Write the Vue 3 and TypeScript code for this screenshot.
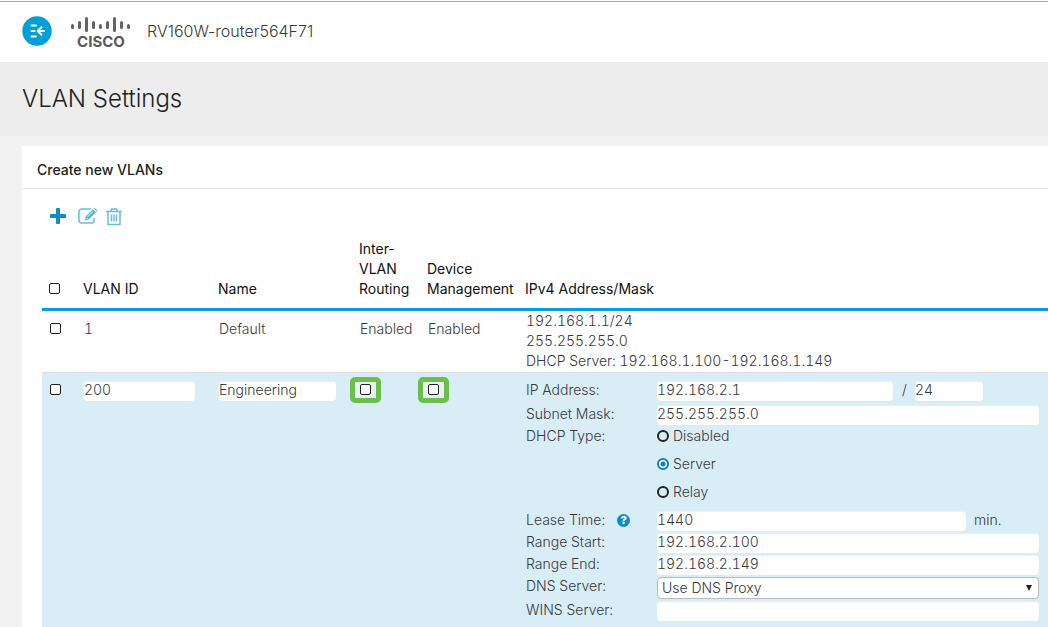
<script setup lang="ts">
import { ref } from 'vue'

interface Vlan {
  id: number
  name: string
  routing: string
  management: string
  lines: string[]
}

const vlans: Vlan[] = [
  {
    id: 1,
    name: 'Default',
    routing: 'Enabled',
    management: 'Enabled',
    lines: ['192.168.1.1/24', '255.255.255.0', 'DHCP Server: 192.168.1.100-192.168.1.149'],
  },
]

const dhcpTypes = ['Disabled', 'Server', 'Relay']
const dhcpType = ref('Server')
const vlanId = ref('200')
const vlanName = ref('Engineering')
const ip = ref('192.168.2.1')
const prefix = ref('24')
const mask = ref('255.255.255.0')
const lease = ref('1440')
const rangeStart = ref('192.168.2.100')
const rangeEnd = ref('192.168.2.149')
const dns = ref('Use DNS Proxy')
const wins = ref('')

// x, top and height of each bar of the logo
const bars = [
  [1, 8, 5], [8, 5, 8], [15, 1, 15], [22, 5, 8], [29, 8, 5],
  [36, 5, 8], [43, 1, 15], [50, 5, 8], [57, 8, 5],
]
</script>

<template>
  <div class="page">
    <header class="topbar">
      <button class="menu" type="button" aria-label="Toggle navigation">
        <svg width="30" height="30" viewBox="0 0 30 30">
          <circle cx="15" cy="15" r="14.7" fill="#049fd9" />
          <g fill="none" stroke="#fff" stroke-width="2" stroke-linecap="round" stroke-linejoin="round">
            <path d="M9.500 9.500h4.500M9.500 15h3M9.500 20.500h4.500" />
            <path d="M22 15h-5.500M19.500 11.200L15.700 15l3.800 3.800" />
          </g>
        </svg>
      </button>
      <div class="brand">
        <svg width="62" height="18" viewBox="0 0 62 18" aria-hidden="true">
          <rect v-for="b in bars" :key="b[0]" :x="b[0]" :y="b[1]" width="3" :height="b[2]" rx="1.500" fill="#636466" />
        </svg>
        <span class="brand-name">CISCO</span>
      </div>
      <span class="device">RV160W-router564F71</span>
    </header>

    <div class="title"><h1>VLAN Settings</h1></div>

    <main class="card">
      <h2>Create new VLANs</h2>
      <div class="tools">
        <button type="button" class="add" aria-label="Add">
          <svg width="16" height="16" viewBox="0 0 16 16"><path d="M8 1.500v13M1.500 8h13" stroke="#0d8dc0" stroke-width="4" stroke-linecap="round" /></svg>
        </button>
        <button type="button" aria-label="Edit">
          <svg width="20" height="16" viewBox="0 0 20 16">
            <path d="M13 1H3.500A2.500 2.500 0 0 0 1 3.500v9A2.500 2.500 0 0 0 3.500 15h10a2.500 2.500 0 0 0 2.500-2.500V10" fill="none" stroke="#6cbbdb" stroke-width="1.500" />
            <path d="M7 12.500l.6-4L15 1.200l3 3-7.300 7.300zM15.800.6l1-.5 2.900 2.800-.7 1z" fill="#5ab3d8" />
            <path d="M9.500 8.800l5-5M8.200 9.700l1.500 1.600" stroke="#fff" stroke-width=".8" />
          </svg>
        </button>
        <button type="button" aria-label="Delete">
          <svg width="16" height="18" viewBox="0 0 16 18" fill="none" stroke="#6cbbdb" stroke-width="1.500">
            <path d="M0 3.500h16M4.500 3.500L5.500 1h5l1 2.500M2 4v12.500h12V4M5.500 6.500v7M8 6.500v7M10.500 6.500v7" />
          </svg>
        </button>
      </div>

      <table>
        <colgroup>
          <col class="c-check" /><col class="c-id" /><col class="c-name" />
          <col class="c-routing" /><col class="c-mgmt" /><col />
        </colgroup>
        <thead>
          <tr>
            <th><input type="checkbox" aria-label="Select all VLANs" /></th>
            <th>VLAN ID</th>
            <th>Name</th>
            <th>Inter-<br />VLAN Routing</th>
            <th>Device Management</th>
            <th>IPv4 Address/Mask</th>
          </tr>
        </thead>
        <tbody>
          <tr v-for="v in vlans" :key="v.id" class="row">
            <td><input type="checkbox" :aria-label="`Select VLAN ${v.id}`" /></td>
            <td>{{ v.id }}</td>
            <td>{{ v.name }}</td>
            <td>{{ v.routing }}</td>
            <td>{{ v.management }}</td>
            <td class="address"><div v-for="l in v.lines" :key="l">{{ l }}</div></td>
          </tr>
          <tr class="editing">
            <td><input type="checkbox" aria-label="Select VLAN 200" /></td>
            <td><input v-model="vlanId" class="text" type="text" aria-label="VLAN ID" /></td>
            <td><input v-model="vlanName" class="text" type="text" aria-label="Name" /></td>
            <td class="marked"><label class="mark"><input type="checkbox" aria-label="Inter-VLAN Routing" /></label></td>
            <td class="marked"><label class="mark"><input type="checkbox" aria-label="Device Management" /></label></td>
            <td>
              <div class="form">
                <label for="ip">IP Address:</label>
                <div class="field split">
                  <input id="ip" v-model="ip" class="text" type="text" />
                  <span class="slash">/</span>
                  <input v-model="prefix" class="text" type="text" aria-label="Prefix length" />
                </div>
                <label for="mask" class="spaced">Subnet Mask:</label>
                <div class="field spaced"><input id="mask" v-model="mask" class="text" type="text" /></div>
                <span id="dhcp-type">DHCP Type:</span>
                <div class="radios" role="radiogroup" aria-labelledby="dhcp-type">
                  <label v-for="t in dhcpTypes" :key="t">
                    <input v-model="dhcpType" type="radio" name="dhcp" :value="t" />{{ t }}
                  </label>
                </div>
                <div class="with-help">
                  <label for="lease">Lease Time:</label>
                  <button class="help" type="button" aria-label="Lease time help">?</button>
                </div>
                <div class="field lease">
                  <input id="lease" v-model="lease" class="text" type="text" />
                  <span>min.</span>
                </div>
                <label for="start">Range Start:</label>
                <div class="field"><input id="start" v-model="rangeStart" class="text" type="text" /></div>
                <label for="end">Range End:</label>
                <div class="field"><input id="end" v-model="rangeEnd" class="text" type="text" /></div>
                <label for="dns">DNS Server:</label>
                <div class="field picker">
                  <select id="dns" v-model="dns"><option>Use DNS Proxy</option></select>
                </div>
                <label for="wins">WINS Server:</label>
                <div class="field"><input id="wins" v-model="wins" class="text" type="text" /></div>
                <span class="spaced">DHCP Options:</span>
              </div>
            </td>
          </tr>
        </tbody>
      </table>
    </main>
  </div>
</template>

<style>
html {
  scrollbar-width: none;
}
body {
  margin: 0;
  background: #f2f2f2;
}
</style>

<style scoped>
.page {
  font: 300 14px/20px Inter, "Liberation Sans", sans-serif;
  color: #39393b;
  border-top: 1px solid #fff;
}
button {
  padding: 0;
  border: 0;
  background: none;
  display: flex;
  cursor: pointer;
}
svg {
  display: block;
}
.topbar {
  height: 58px;
  border-top: 1px solid #b0b0b0;
  background: #fff;
  display: flex;
  align-items: center;
  padding: 0 0 2px 22px;
}
.brand {
  margin-left: 18px;
  padding-top: 4px;
  display: flex;
  flex-direction: column;
  align-items: center;
}
.brand-name {
  font: 700 15px/16px Inter, sans-serif;
  color: #58595b;
}
.device {
  margin-left: 15px;
  font-size: 16px;
}
.title {
  background: #ededed;
  padding: 21px 22px;
}
h1 {
  margin: 0;
  font-size: 24px;
  line-height: 32px;
  font-weight: 300;
  color: #222;
}
.card {
  margin: 10px 0 0 22px;
  background: #fff;
}
h2 {
  margin: 0;
  padding: 14px 15px 8px;
  font-size: 14px;
  font-weight: 500;
  line-height: 20px;
  color: #222;
  border-bottom: 1px solid #e4e7ea;
}
.tools {
  display: flex;
  align-items: flex-start;
  gap: 8px;
  height: 18px;
  padding: 19px 28px 13px;
}
.add {
  width: 20px;
}
table {
  width: calc(100% - 20px);
  margin-left: 20px;
  table-layout: fixed;
  border-collapse: separate;
  border-spacing: 0;
}
.c-check { width: 32px; }
.c-id { width: 135px; }
.c-name { width: 141px; }
.c-routing { width: 68px; }
.c-mgmt { width: 98px; }
th {
  padding: 0 0 9px 9px;
  text-align: left;
  vertical-align: bottom;
  font-weight: 400;
  color: #111;
  border-bottom: 3px solid #049fd9;
}
td {
  padding: 8px 14px 0 10px;
  vertical-align: top;
  font-variant-numeric: tabular-nums;
}
th:first-child {
  padding-left: 7px;
}
td:first-child {
  padding-left: 8px;
}
.row td.address {
  padding-top: 0;
  padding-bottom: 1px;
}
.editing td {
  background: #d9edf7;
  border-top: 1px solid #ddd;
  padding-top: 7px;
}
.editing td:last-child {
  padding-right: 9px;
}
.editing td.marked {
  padding: 4px 0 0;
}
input[type='checkbox'] {
  appearance: none;
  display: block;
  box-sizing: border-box;
  width: 11px;
  height: 11px;
  margin: 4px 0 5px;
  border: 1px solid #222;
  border-radius: 2px;
  background: #fff;
}
.mark {
  box-sizing: border-box;
  width: 31px;
  height: 26px;
  border: 5px solid #6cbf4b;
  border-radius: 5px;
  display: flex;
  align-items: center;
  justify-content: center;
  background: #e6f2f8;
}
.text {
  display: block;
  box-sizing: border-box;
  width: 100%;
  height: 20px;
  margin: 1px 0 0;
  padding: 0 0 2px;
  border: 0;
  border-radius: 4px;
  background: #fff;
  font: inherit;
  font-variant-numeric: inherit;
  color: inherit;
  box-shadow: inset 0 1px 1px #ececec;
}
.form {
  display: grid;
  grid-template-columns: 131px minmax(0, 1fr);
  row-gap: 2px;
}
.field {
  height: 20px;
}
.spaced {
  margin-top: 2px;
}
.split {
  display: grid;
  grid-template-columns: minmax(0, 1fr) 22px 68px;
  padding-right: 56px;
}
.slash {
  padding-left: 9px;
}
.radios {
  display: flex;
  flex-direction: column;
  gap: 8px;
  padding-bottom: 6px;
}
.radios label {
  display: flex;
  align-items: center;
  gap: 4px;
}
input[type='radio'] {
  appearance: none;
  box-sizing: border-box;
  width: 12px;
  height: 12px;
  margin: 0;
  border: 2px solid #222;
  border-radius: 50%;
}
input[type='radio']:checked {
  border-color: #0d7fb5;
  background: radial-gradient(circle, #0d7fb5 0 2px, #fff 3px);
}
.with-help {
  display: flex;
  align-items: center;
  gap: 12px;
}
.help {
  width: 13px;
  height: 13px;
  border-radius: 50%;
  background: #0d8dc0;
  color: #fff;
  font: 800 11px/13px Inter, sans-serif;
  justify-content: center;
}
.lease {
  display: grid;
  grid-template-columns: minmax(0, 1fr) 65px;
  column-gap: 8px;
}
.picker {
  position: relative;
  height: 22px;
}
select {
  appearance: none;
  display: block;
  box-sizing: border-box;
  width: 100%;
  height: 22px;
  margin-top: 1px;
  padding: 0 4px 1px;
  border: 1px solid #bbb;
  border-radius: 4px;
  font: inherit;
  color: inherit;
  background: #fff;
}
.picker::after {
  content: '';
  position: absolute;
  right: 7px;
  top: 9px;
  border: 3px solid transparent;
  border-top: 6px solid #222;
  border-bottom: 0;
  pointer-events: none;
}
</style>
